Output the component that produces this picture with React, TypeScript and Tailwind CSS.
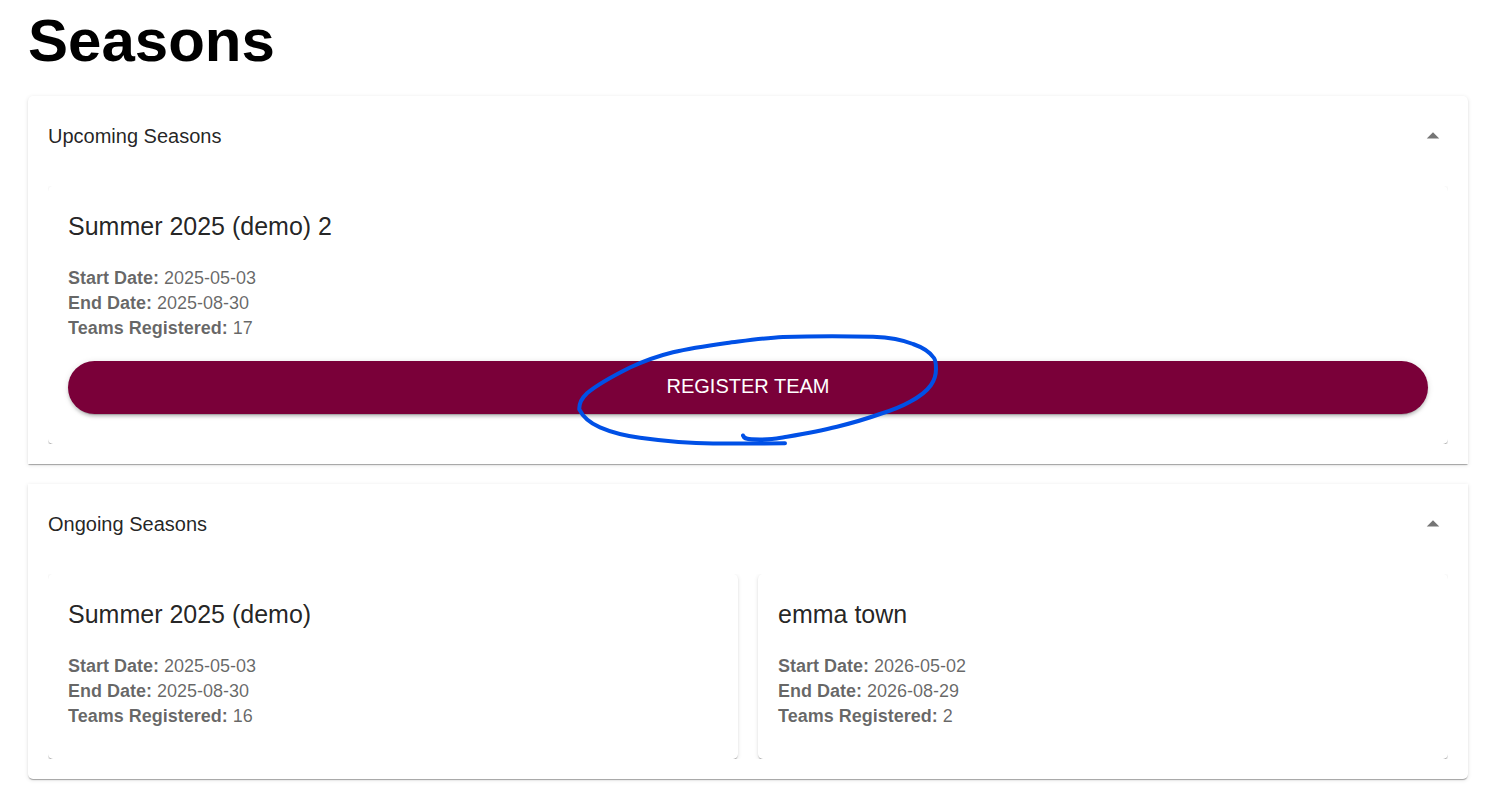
import { useId, useState } from "react";
import type { ReactNode } from "react";

type Season = {
  name: string;
  start: string;
  end: string;
  teams: number;
  open?: boolean;
};

const upcoming: Season[] = [
  { name: "Summer 2025 (demo) 2", start: "2025-05-03", end: "2025-08-30", teams: 17, open: true },
];

const ongoing: Season[] = [
  { name: "Summer 2025 (demo)", start: "2025-05-03", end: "2025-08-30", teams: 16 },
  { name: "emma town", start: "2026-05-02", end: "2026-08-29", teams: 2 },
];

const paperShadow =
  "shadow-[0_2px_1px_-1px_rgba(0,0,0,0.2),0_1px_1px_0_rgba(0,0,0,0.14),0_1px_4px_0_rgba(0,0,0,0.12)]";

function SeasonCard({ season }: { season: Season }) {
  return (
    <article className={`min-w-0 flex-1 rounded-[5px] bg-white px-5 pt-5 pb-[30px] ${paperShadow}`}>
      <h3 className="mb-5 text-[25px] leading-10 text-black/87">{season.name}</h3>
      <div className="text-[18px] leading-[25px] text-black/60">
        <p>
          <strong>Start Date:</strong> {season.start}
        </p>
        <p>
          <strong>End Date:</strong> {season.end}
        </p>
        <p>
          <strong>Teams Registered:</strong> {season.teams}
        </p>
      </div>
      {season.open && (
        <button
          type="button"
          className="mt-5 h-[53px] w-full cursor-pointer rounded-full bg-[#7a0039] pb-1 text-[20px] leading-8 text-white uppercase shadow-[0_4px_1px_-3px_rgba(0,0,0,0.2),0_3px_3px_0_rgba(0,0,0,0.14),0_1px_6px_0_rgba(0,0,0,0.12)]"
        >
          Register Team
        </button>
      )}
    </article>
  );
}

function Panel({
  title,
  seasons,
  className,
  children,
}: {
  title: string;
  seasons: Season[];
  className: string;
  children?: ReactNode;
}) {
  const [expanded, setExpanded] = useState(true);
  const id = useId();
  return (
    <section className={`bg-white ${paperShadow} ${className}`}>
      <h2>
        <button
          type="button"
          aria-expanded={expanded}
          aria-controls={id}
          onClick={() => setExpanded(!expanded)}
          className="flex h-20 w-full cursor-pointer items-center justify-between px-5 text-left text-[20px] leading-[30px] text-black/87"
        >
          {title}
          <svg
            viewBox="0 0 24 24"
            aria-hidden="true"
            className={`size-[30px] fill-black/54 ${expanded ? "" : "rotate-180"}`}
          >
            <path d="m7 14 5-5 5 5z" />
          </svg>
        </button>
      </h2>
      {expanded && (
        <div id={id} className="relative px-5 pt-[10px] pb-5">
          <div className="flex gap-5 overflow-hidden">
            {seasons.map((season) => (
              <SeasonCard key={season.name} season={season} />
            ))}
          </div>
          {children}
        </div>
      )}
    </section>
  );
}

function PenCircle() {
  return (
    <svg
      viewBox="548 328 400 124"
      aria-hidden="true"
      className="pointer-events-none absolute bottom-3 left-1/2 h-[124px] w-[400px] -translate-x-1/2"
      fill="none"
      stroke="#0050e6"
      strokeWidth="4"
      strokeLinecap="round"
      strokeLinejoin="round"
    >
      <path d="M743 435.500C744 438.500 747 439.300 752 439.300C759 439.500 766 439.500 772 439C777 438.500 782 437.500 787 436.700C804 433.800 821 430.800 837 426.700C852 423 866 419 880 414C891 410.500 901 406.800 910 401.700C919 397 926.500 391.500 931 385C934.500 380 936 375 936 369C936 365 936 361 934 358C930 352 923 347.500 913 344C902 339.500 888 337.300 873 336.700C843 336 813 336 783 337C764 338 745 340.800 727 343C709 345.500 691 348 673 352.300C658 356 643 361.500 630 367.500C615 375 599 383 587 393.300C582 398 579 403 579.300 409.300C583 417 590 423 600 427.300C612 432.500 626 435.800 640 437.700C664 441 689 443.300 713 443.500C737 443.700 761 443.400 785 443.300" />
    </svg>
  );
}

export default function App() {
  return (
    <main className="pt-[9px] pr-[29px] pb-5 pl-7 font-['Liberation_Sans',Arial,sans-serif]">
      <h1 className="text-[60px] leading-[63px] font-bold text-black">Seasons</h1>
      <div className="mt-6 flex flex-col gap-5">
        <Panel title="Upcoming Seasons" seasons={upcoming} className="rounded-t-[5px]">
          <PenCircle />
        </Panel>
        <Panel title="Ongoing Seasons" seasons={ongoing} className="rounded-b-[5px]" />
      </div>
    </main>
  );
}
